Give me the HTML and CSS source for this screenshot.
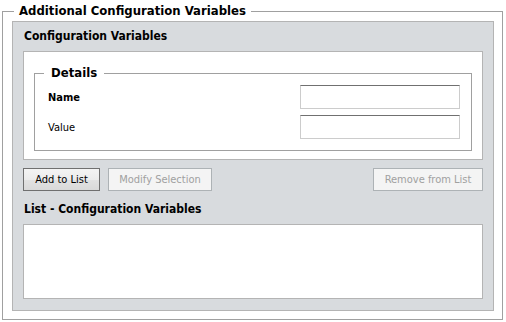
FILE: index.html
```html
<!DOCTYPE html>
<html>
<head>
<meta charset="utf-8">
<link rel="stylesheet" href="styles.css">
</head>
<body>
<fieldset class="outer">
  <legend class="outer-legend">Additional Configuration Variables</legend>
  <div class="panel">
    <div class="heading">Configuration Variables</div>
    <div class="whitebox">
      <fieldset class="details">
        <legend class="details-legend">Details</legend>
        <div class="row">
          <span class="label bold">Name</span>
          <span class="input"></span>
        </div>
        <div class="row">
          <span class="label">Value</span>
          <span class="input"></span>
        </div>
      </fieldset>
    </div>
    <div class="buttons">
      <button class="btn btn-add">Add to List</button>
      <button class="btn btn-modify" disabled>Modify Selection</button>
      <span class="spacer"></span>
      <button class="btn btn-remove" disabled>Remove from List</button>
    </div>
    <div class="heading heading-list">List - Configuration Variables</div>
    <div class="listbox"></div>
  </div>
</fieldset>
</body>
</html>
```

FILE: styles.css
```css
html, body {
  margin: 0;
  padding: 0;
  background: #ffffff;
}
body {
  width: 506px;
  height: 322px;
  padding-top: 3px;
  box-sizing: border-box;
  font-family: "DejaVu Sans Condensed", "DejaVu Sans", sans-serif;
  font-size: 11px;
  color: #000;
}
.outer {
  margin: 0 3px 3px 2px;
  padding: 2px 8px 8px 9px;
  border: 1px solid #a0a0a0;
  min-width: 0;
}
.outer-legend {
  margin-left: 2px;
  padding: 0 5px;
  font-weight: bold;
  font-size: 13px;
  line-height: 16px;
}
.panel {
  background: #d8dbde;
  border: 1px solid #b4b4b4;
  padding: 0 10px 11px 10px;
  display: flex;
  flex-direction: column;
}
.heading {
  font-weight: bold;
  font-size: 12px;
  line-height: 16px;
  padding-left: 1px;
  margin-top: 6px;
  margin-bottom: 7px;
}
.whitebox {
  background: #fff;
  border: 1px solid #b4b4b4;
  padding: 13px 10px 8px 10px;
}
.details {
  margin: 0;
  border: 1px solid #a0a0a0;
  padding: 4px 11px 11px 9px;
  min-width: 0;
}
.details-legend {
  padding: 0 7px;
  font-weight: bold;
  font-size: 13px;
  line-height: 16px;
}
.row {
  display: flex;
  align-items: center;
  justify-content: space-between;
  padding-left: 4px;
}
.row + .row {
  margin-top: 6px;
}
.bold {
  font-weight: bold;
}
.input {
  display: block;
  width: 158px;
  height: 22px;
  border: 1px solid #cccccc;
  border-top-color: #707070;
  background: #fff;
}
.buttons {
  display: flex;
  gap: 8px;
  margin-top: 8px;
}
.spacer {
  flex: 1;
}
.btn {
  height: 23px;
  font-family: inherit;
  font-size: 11px;
  padding: 0;
  margin: 0;
  border-radius: 0;
  border: 1px solid #707070;
  background: linear-gradient(#f4f4f4, #ececec 50%, #e2e2e2 51%, #d9d9d9);
  color: #000;
}
.btn[disabled] {
  border-color: #adb2b5;
  background: #f4f4f4;
  color: #a0a0a0;
}
.btn-add { width: 77px; }
.btn-modify { width: 104px; }
.btn-remove { width: 110px; }
.heading-list {
  margin-top: 10px;
  margin-bottom: 7px;
}
.listbox {
  height: 73px;
  background: #fff;
  border: 1px solid #b4b4b4;
}
```
